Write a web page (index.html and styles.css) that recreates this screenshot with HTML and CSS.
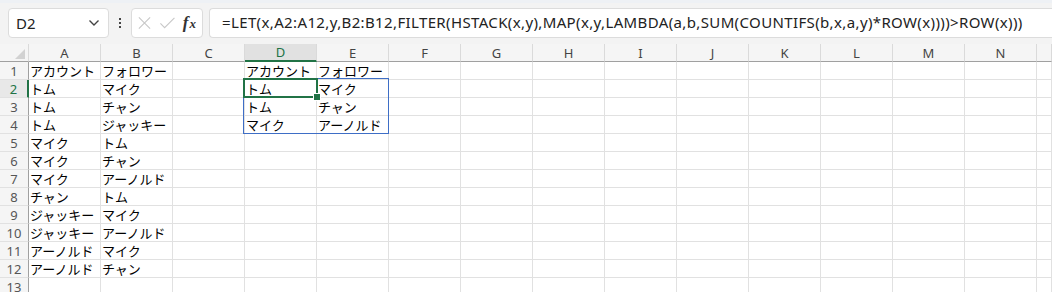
FILE: index.html
```html
<html>
  <head>
    <meta charset="utf-8">
    <link rel="stylesheet" href="styles.css">
  </head>
  <body>
    <div class="formula-bar">
      <div class="name-box">
        <span class="name-box__ref">D2</span>
        <svg class="name-box__caret" width="12" height="8" viewBox="0 0 12 8"><path d="M1.5 1.5 L6 6 L10.5 1.5" fill="none" stroke="#444" stroke-width="1.4"/></svg>
      </div>
      <div class="grip"><i></i><i></i><i></i></div>
      <div class="fx-box">
        <svg width="16" height="16" viewBox="0 0 16 16"><path d="M2 2 L14 14 M14 2 L2 14" stroke="#c8c8c8" stroke-width="1.2"/></svg>
        <svg width="18" height="16" viewBox="0 0 18 16"><path d="M1.5 8.5 L6 13 L16.5 2.5" fill="none" stroke="#c8c8c8" stroke-width="1.2"/></svg>
        <span class="fx-box__fx"><i>f</i><i>x</i></span>
      </div>
      <div class="formula-input">=LET(x,A2:A12,y,B2:B12,FILTER(HSTACK(x,y),MAP(x,y,LAMBDA(a,b,SUM(COUNTIFS(b,x,a,y)*ROW(x))))&gt;ROW(x)))</div>
    </div>

    <div class="sheet">
      <table class="grid" id="grid"></table>
      <div class="spill-range"></div>
      <div class="active-cell"><span class="fill-handle"></span></div>
    </div>

    <script>
const cols = "ABCDEFGHIJKLMNO".split("");
const data = {
  1: ["アカウント", "フォロワー", "", "アカウント", "フォロワー"],
  2: ["トム", "マイク", "", "トム", "マイク"],
  3: ["トム", "チャン", "", "トム", "チャン"],
  4: ["トム", "ジャッキー", "", "マイク", "アーノルド"],
  5: ["マイク", "トム"],
  6: ["マイク", "チャン"],
  7: ["マイク", "アーノルド"],
  8: ["チャン", "トム"],
  9: ["ジャッキー", "マイク"],
  10: ["ジャッキー", "アーノルド"],
  11: ["アーノルド", "マイク"],
  12: ["アーノルド", "チャン"],
  13: []
};
let html = '<tr class="col-heads"><th class="corner"><span class="corner__tri"></span></th>';
cols.forEach(c => {
  let cls = "col-head";
  if (c === "D") cls += " is-active";
  if (c === "O") cls += " is-last";
  html += `<th class="${cls}">${c === "O" ? "" : c}</th>`;
});
html += "</tr>";
for (let r = 1; r <= 13; r++) {
  html += `<tr><th class="row-head${r === 2 ? " is-active" : ""}">${r}</th>`;
  cols.forEach((c, i) => {
    html += `<td${c === "O" ? ' class="is-last"' : ""}>${(data[r][i] || "")}</td>`;
  });
  html += "</tr>";
}
grid.innerHTML = html;
    </script>
  </body>
</html>
```

FILE: styles.css
```css
body {
  margin: 0;
  width: 1052px;
  height: 292px;
  overflow: hidden;
  background: #fff;
  font-family: "Noto Sans CJK JP", "Noto Sans", sans-serif;
}

/* top bar */
.formula-bar {
  display: flex;
  align-items: center;
  height: 44px;
  padding: 6px 0 8px 8px;
  box-sizing: border-box;
  background: #f3f3f3;
  border-top: 3px solid #eef1f5;
}
.name-box {
  display: flex;
  align-items: center;
  justify-content: space-between;
  width: 101px;
  height: 30px;
  box-sizing: border-box;
  padding: 0 8px 0 7px;
  background: #fff;
  border: 1px solid #dcdcdc;
  border-radius: 4px;
}
.name-box__ref {
  font-family: "Noto Sans", sans-serif;
  font-size: 15px;
  color: #222;
}
.grip {
  display: flex;
  flex-direction: column;
  gap: 2px;
  width: 22px;
  align-items: center;
}
.grip i {
  display: block;
  width: 2px;
  height: 2px;
  background: #444;
}
.fx-box {
  display: flex;
  align-items: center;
  gap: 7px;
  width: 72px;
  height: 30px;
  box-sizing: border-box;
  padding: 0 6px 0 5px;
  background: #fff;
  border: 1px solid #dcdcdc;
  border-radius: 4px;
}
.fx-box__fx {
  font-family: "Liberation Serif", serif;
  font-size: 17px;
  color: #333;
  white-space: nowrap;
}
.fx-box__fx i:first-child { font-weight: bold; }
.fx-box__fx i:last-child { font-size: 13px; font-weight: bold; margin-left: 1px; }
.formula-input {
  flex: 1;
  min-width: 0;
  height: 30px;
  margin-left: 6px;
  box-sizing: border-box;
  padding: 0 0 0 12px;
  background: #fff;
  border: 1px solid #dcdcdc;
  border-right: none;
  border-radius: 4px 0 0 4px;
  font-family: "Noto Sans", sans-serif;
  font-size: 15px;
  line-height: 27px;
  color: #222;
  white-space: nowrap;
  overflow: hidden;
  letter-spacing: 0.37px;
}

/* sheet */
.sheet {
  position: relative;
}
.grid {
  border-collapse: separate;
  border-spacing: 0;
  table-layout: fixed;
}
.grid th, .grid td {
  padding: 0;
  height: 17px;
  box-sizing: border-box;
  border-right: 1px solid #e1e1e1;
  border-bottom: 1px solid #e1e1e1;
  overflow: hidden;
  white-space: nowrap;
}
.grid td {
  width: 72px;
  min-width: 72px;
  max-width: 72px;
  height: 18px;
  padding: 0 0 0 1px;
  font-size: 13px;
  line-height: 17px;
  color: #000;
}
.grid .is-last {
  width: 15px;
  min-width: 15px;
  max-width: 15px;
}
.col-heads th {
  height: 17px;
  background: #f5f5f5;
  border-bottom: 1px solid #a0a0a0;
  border-right-color: #dadada;
  font-family: "Noto Sans", sans-serif;
  font-weight: normal;
  font-size: 13px;
  line-height: 16px;
  color: #444;
}
.col-heads .col-head.is-active {
  background: #e1e1e1;
  color: #217346;
  border-bottom: 2px solid #217346;
}
.corner {
  position: relative;
  width: 29px;
  min-width: 29px;
}
.corner__tri {
  position: absolute;
  right: 3px;
  bottom: 2px;
  border-left: 10px solid transparent;
  border-bottom: 10px solid #d2d2d2;
}
.row-head {
  width: 29px;
  min-width: 29px;
  max-width: 29px;
  background: #f5f5f5;
  border-right: 1px solid #a0a0a0 !important;
  font-family: "Noto Sans", sans-serif;
  font-weight: normal;
  font-size: 13px;
  line-height: 16px;
  color: #555;
  text-align: center;
}
.row-head.is-active {
  color: #217346;
  background: #e8e8e8;
  border-right: 2px solid #217346 !important;
}

/* selection overlays */
.spill-range {
  position: absolute;
  left: 243px;
  top: 34px;
  width: 146px;
  height: 56px;
  box-sizing: border-box;
  border: 1px solid #3e6ec6;
}
.active-cell {
  position: absolute;
  left: 243px;
  top: 34px;
  width: 75px;
  height: 20px;
  box-sizing: border-box;
  border: 2px solid #217346;
}
.fill-handle {
  position: absolute;
  right: -5px;
  bottom: -5px;
  width: 6px;
  height: 6px;
  background: #217346;
  border: 1px solid #fff;
}
```
